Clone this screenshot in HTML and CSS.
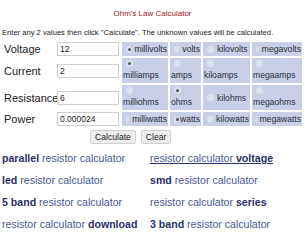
FILE: index.html
```html
<!DOCTYPE html>
<html lang="en">
<head>
    <meta charset="UTF-8">
    <title>Ohm's Law Calculator</title>
    <link rel="stylesheet" href="styles.css">
</head>
<body>
    <div class="title">Ohm's Law Calculator</div>
    <p class="intro">Enter any 2 values then click "Calculate". The unknown values will be calculated.</p>

    <form class="calc">
        <!-- voltage -->
        <div class="label">Voltage</div>
        <div class="field"><input type="text" value="12"></div>
        <label class="unit"><span class="radio on"></span>millivolts</label>
        <label class="unit"><span class="radio"></span>volts</label>
        <label class="unit"><span class="radio"></span>kilovolts</label>
        <label class="unit"><span class="radio"></span>megavolts</label>

        <!-- current -->
        <div class="label">Current</div>
        <div class="field"><input type="text" value="2"></div>
        <label class="unit stack"><span class="radio on"></span>milliamps</label>
        <label class="unit stack"><span class="radio"></span>amps</label>
        <label class="unit stack"><span class="radio"></span>kiloamps</label>
        <label class="unit stack"><span class="radio"></span>megaamps</label>

        <!-- resistance -->
        <div class="label">Resistance</div>
        <div class="field"><input type="text" value="6"></div>
        <label class="unit stack"><span class="radio"></span>milliohms</label>
        <label class="unit stack"><span class="radio on"></span>ohms</label>
        <label class="unit"><span class="radio"></span>kilohms</label>
        <label class="unit stack"><span class="radio"></span>megaohms</label>

        <!-- power -->
        <div class="label">Power</div>
        <div class="field"><input type="text" value="0.000024"></div>
        <label class="unit"><span class="radio"></span>milliwatts</label>
        <label class="unit"><span class="radio on"></span>watts</label>
        <label class="unit"><span class="radio"></span>kilowatts</label>
        <label class="unit"><span class="radio"></span>megawatts</label>
    </form>

    <div class="buttons">
        <button type="button">Calculate</button>
        <button type="button">Clear</button>
    </div>

    <div class="links">
        <a href="#"><b>parallel</b> resistor calculator</a>
        <a href="#" class="hover">resistor calculator <b>voltage</b></a>
        <a href="#"><b>led</b> resistor calculator</a>
        <a href="#"><b>smd</b> resistor calculator</a>
        <a href="#"><b>5 band</b> resistor calculator</a>
        <a href="#">resistor calculator <b>series</b></a>
        <a href="#">resistor calculator <b>download</b></a>
        <a href="#"><b>3 band</b> resistor calculator</a>
    </div>
</body>
</html>
```

FILE: styles.css
```css
body {
    margin: 0;
    padding: 0 2px;
    font-family: "Liberation Sans", Arial, sans-serif;
    color: #222;
    background: #fff;
}

.title {
    margin-top: 9px;
    text-align: center;
    font-size: 8px;
    color: #a3191c;
}

.intro {
    margin: 10px 0 0 0;
    font-size: 7.6px;
    color: #222;
}

.calc {
    display: grid;
    grid-template-columns: 53px 63px 46px 31px 47px 50px;
    gap: 2px;
    margin-top: 5px;
}

.label {
    display: flex;
    align-items: center;
    padding-left: 2px;
    font-size: 11px;
    color: #222;
}

.field {
    display: flex;
    align-items: center;
}

.field input {
    width: 62px;
    height: 14px;
    box-sizing: border-box;
    padding: 0 2px;
    border: 1px solid #cfcfcf;
    font-family: "Liberation Sans", Arial, sans-serif;
    font-size: 8.5px;
    color: #222;
}

.unit {
    display: flex;
    align-items: center;
    gap: 3px;
    padding: 2px 1px;
    background: #c9cfe9;
    font-size: 8.6px;
    color: #2b2d3a;
    white-space: nowrap;
}

.unit.stack {
    flex-direction: column;
    align-items: flex-start;
    justify-content: flex-end;
    gap: 3px;
    padding-bottom: 3px;
}

.radio {
    display: inline-block;
    width: 7px;
    height: 7px;
    margin-left: 3px;
    border-radius: 50%;
    background: #dde1ee;
    position: relative;
}

.radio.on::after {
    content: "";
    position: absolute;
    left: 2px;
    top: 2px;
    width: 3px;
    height: 3px;
    border-radius: 50%;
    background: #555;
}

.buttons {
    display: flex;
    gap: 5px;
    margin: 4px 0 0 88px;
}

.buttons button {
    height: 14px;
    padding: 0 4px;
    border: 1px solid #d0d0d0;
    border-radius: 2px;
    background: #ededed;
    font-family: "Liberation Sans", Arial, sans-serif;
    font-size: 8.6px;
    color: #222;
}

.links {
    display: grid;
    grid-template-columns: 148px 150px;
    grid-auto-rows: 22px;
    margin-top: 3px;
    align-items: center;
}

.links a {
    font-size: 10.6px;
    color: #4b5794;
    text-decoration: none;
}

.links a b {
    color: #2b2f6c;
}

.links a.hover {
    text-decoration: underline;
    text-decoration-color: #2b2f6c;
}
```
